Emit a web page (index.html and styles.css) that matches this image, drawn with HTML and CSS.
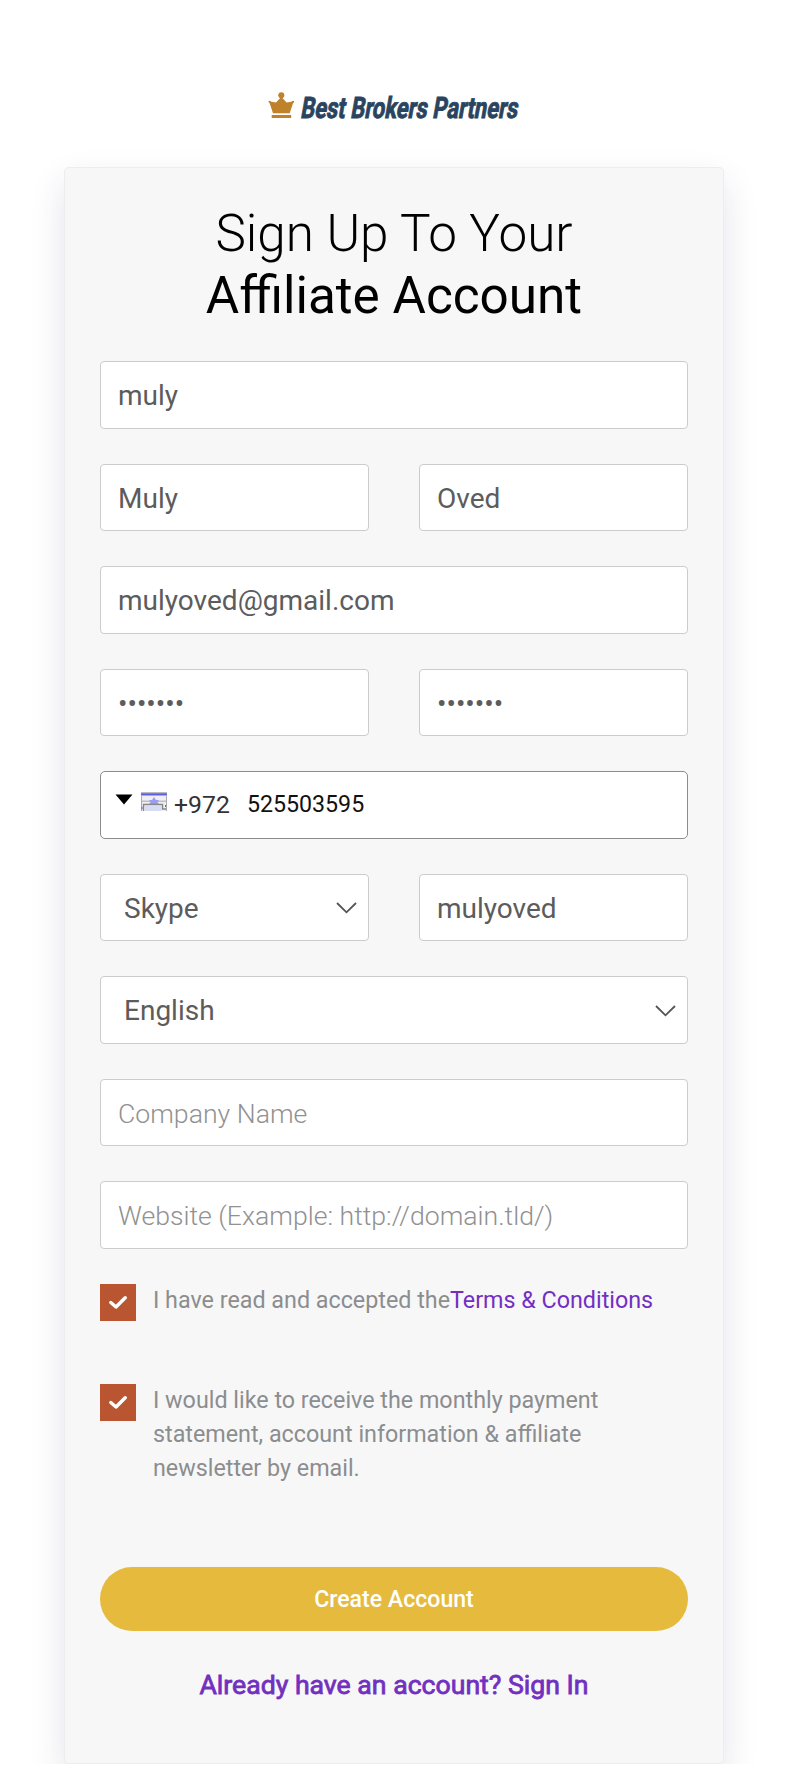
FILE: index.html
```html
<!DOCTYPE html>
<html lang="en">
<head>
<meta charset="utf-8">
<title>Sign Up - Best Brokers Partners</title>
<link rel="stylesheet" href="styles.css">
</head>
<body>
<main class="page">
  <header class="brand">
    <svg class="brand-logo" viewBox="0 0 290 50" role="img" aria-label="Best Brokers Partners">
      <g fill="#bf8129">
        <circle cx="31.3" cy="15.2" r="3"/>
        <path d="M18.5 21.2Q20 20 21.2 21.7L26 22.5 30.2 18H32.4L36.6 22.5 41.5 21.7Q42.8 20 44.2 21.2 44.2 22.5 43 23.2L39.7 33.2H23L19.7 23.2Q18.5 22.5 18.5 21.2Z"/>
        <rect x="21.7" y="35" width="19.5" height="3"/>
      </g>
      <text class="brand-name" transform="translate(50 38) skewX(-10)" textLength="217" lengthAdjust="spacingAndGlyphs">Best Brokers Partners</text>
    </svg>
  </header>
  <section class="card">
    <h1 class="title"><span class="title-light">Sign Up To Your</span><br><span class="title-strong">Affiliate Account</span></h1>
    <form class="form">
      <input class="field" type="text" value="muly">
      <div class="row">
        <input class="field" type="text" value="Muly">
        <input class="field" type="text" value="Oved">
      </div>
      <input class="field" type="text" value="mulyoved@gmail.com">
      <div class="row">
        <input class="field" type="password" value="abcdefg">
        <input class="field" type="password" value="abcdefg">
      </div>
      <div class="field phone">
        <svg class="caret" viewBox="0 0 18 11"><path d="M.5.6H17.5L9 10.6Z"/></svg>
        <svg class="flag" viewBox="0 0 26 19">
          <rect width="26" height="19" fill="#eeeef3"/>
          <rect width="26" height="1" fill="#bbb"/>
          <rect y="1.2" width="26" height="2.3" fill="#5c60e8"/>
          <rect y="8.7" width="26" height="1" fill="#aaa"/>
          <path d="M13 5L15 8H18L16.5 10.3 18 12H8L9.5 10.3 8 8H11Z" fill="#9a9df0"/>
          <path d="M2.5 19V12.5H21.5V17H25" fill="none" stroke="#888" stroke-width="1.4"/>
          <rect x="4" y="13.5" width="16" height="5.5" fill="#d5dcf4"/>
          <path d="M.5 4V19M25.5 4V19" stroke="#aaa"/>
          <path d="M1 15V17M24.5 13V15" stroke="#5c60e8"/>
        </svg>
        <span class="dial-code">+972</span>
        <span class="phone-number">525503595</span>
      </div>
      <div class="row">
        <div class="field select"><span>Skype</span><svg class="chevron" viewBox="0 0 21 12"><path d="M1 1L10.5 10.3 20 1"/></svg></div>
        <input class="field" type="text" value="mulyoved">
      </div>
      <div class="field select"><span>English</span><svg class="chevron" viewBox="0 0 21 12"><path d="M1 1L10.5 10.3 20 1"/></svg></div>
      <input class="field" type="text" placeholder="Company Name">
      <input class="field website" type="text" placeholder="Website (Example: http://domain.tld/)">
    </form>
    <div class="consents">
      <div class="consent">
        <span class="box"><svg viewBox="0 0 18 13"><path d="M1.8 6.5L7 11 16.2 1.8"/></svg></span>
        <p class="consent-text">I have read and accepted the<a class="terms">Terms &amp; Conditions</a></p>
      </div>
      <div class="consent">
        <span class="box"><svg viewBox="0 0 18 13"><path d="M1.8 6.5L7 11 16.2 1.8"/></svg></span>
        <p class="consent-text">I would like to receive the monthly payment<br>statement, account information &amp; affiliate<br>newsletter by email.</p>
      </div>
    </div>
    <button class="submit" type="button">Create Account</button>
    <a class="signin">Already have an account? Sign In</a>
  </section>
</main>
</body>
</html>
```
FILE: styles.css
```css
* { box-sizing: border-box; }
body { margin: 0; background: #fff; font-family: Roboto, sans-serif; }
.page { height: 1764px; padding: 80px 78px 0 64px; overflow: hidden; }
.brand { height: 87px; padding-left: 186px; }
.brand-logo { display: block; width: 290px; height: 50px; overflow: visible; }
.brand-name { font: 700 29.5px Roboto, sans-serif; fill: #29445f; stroke: #29445f; stroke-width: .9px; }
.card {
  height: 1597px; padding: 35px 35px 0; background: #f7f7f7;
  border: 1px solid #ededf0; border-radius: 5px;
  box-shadow: 0 15px 35px rgba(50, 50, 105, .13);
}
.title { margin: 0; font-size: 51.25px; line-height: 62px; text-align: center; color: #000; white-space: nowrap; }
.title-light { font-weight: 300; }
.title-strong { font-weight: 400; }
.form { display: flex; flex-direction: column; gap: 35px; margin-top: 34px; }
.row { display: grid; grid-template-columns: 1fr 1fr; gap: 50px; }
.field {
  width: 100%; height: 67.5px; padding: 2px 17px 0; background: #fff;
  border: 1px solid #ccc; border-radius: 4px;
  font: 400 28px Roboto, sans-serif; color: #5c5c5c;
}
.field::placeholder { color: #919191; font-size: 26.65px; font-weight: 300; opacity: 1; }
.select { display: flex; align-items: center; justify-content: space-between; padding: 2px 11px 0 23px; }
.chevron { width: 21px; height: 12px; fill: none; stroke: #555; stroke-width: 1.8; }
.phone { display: flex; align-items: flex-start; padding: 0 14px; border-color: #8c8c8c; border-radius: 5px; line-height: 28px; color: #111; }
.caret { width: 18px; height: 11px; margin-top: 21.5px; }
.flag { width: 26px; height: 19px; margin: 20px 7px 0 8px; }
.dial-code { margin-top: 19px; font-size: 24.8px; color: #333; }
.phone-number { margin: 18px 0 0 17px; font-size: 23.2px; }
.consents { display: flex; flex-direction: column; gap: 64px; margin-top: 35px; }
.consent { display: flex; align-items: flex-start; }
.box { display: grid; place-items: center; flex: none; width: 36px; height: 37px; background: #b95530; }
.box svg { width: 18px; height: 13px; fill: none; stroke: #fff; stroke-width: 3.4; stroke-linecap: round; stroke-linejoin: round; }
.consent-text { margin: -1px 0 0 17px; font-size: 23.3px; line-height: 34px; color: #8b8d8f; white-space: nowrap; }
.consent + .consent { margin-top: -1px; }
.terms { color: #732fc2; }
.submit { display: block; width: 588px; height: 64px; margin-top: 82px; padding: 1px 0 0; border: 0; border-radius: 32px; background: #e6bb3d; color: #fff; font: 500 23.1px Roboto, sans-serif; }
.signin { display: block; margin-top: 37px; text-align: center; font-size: 26.65px; line-height: 34px; color: #7230bf; -webkit-text-stroke: .8px #7230bf; }
```
